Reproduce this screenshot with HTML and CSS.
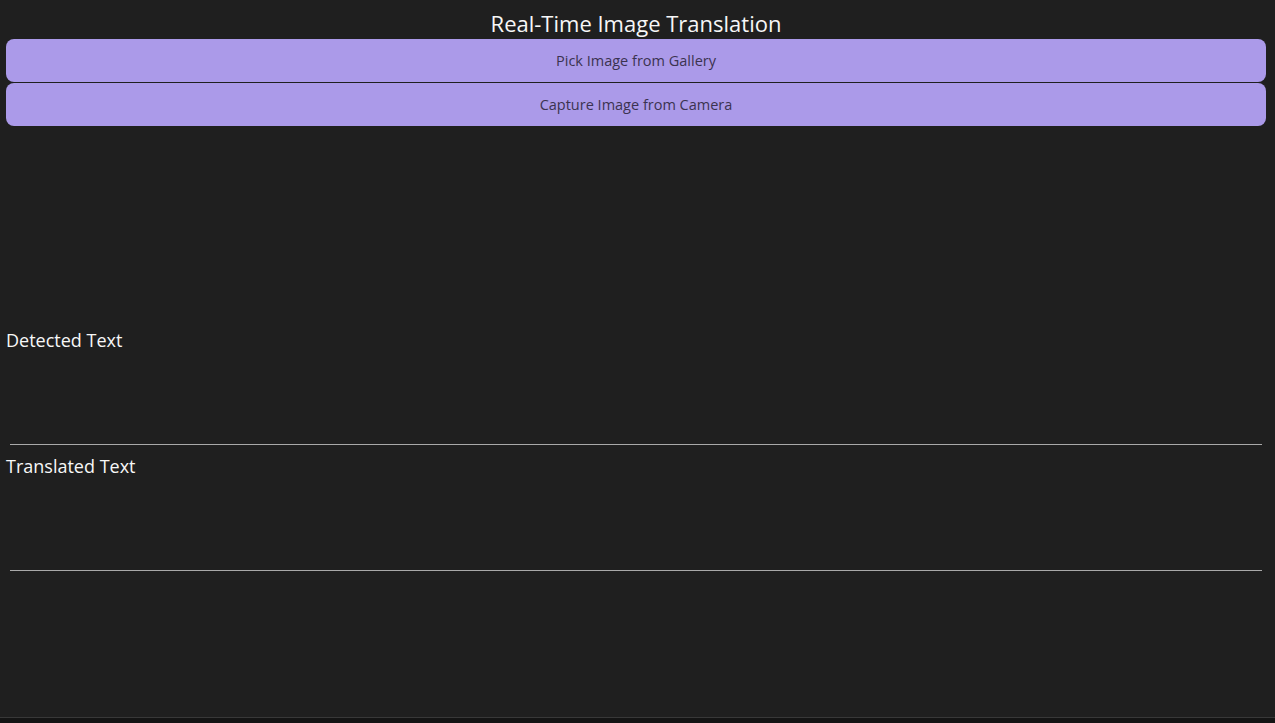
FILE: index.html
```html
<!DOCTYPE html>
<html>
<head>
<meta charset="utf-8">
<link rel="stylesheet" href="styles.css">
</head>
<body>
<div class="app">
  <h1 class="title">Real-Time Image Translation</h1>
  <div class="buttons">
    <button class="btn">Pick Image from Gallery</button>
    <button class="btn">Capture Image from Camera</button>
  </div>
  <div class="image-area"></div>
  <h2 class="label">Detected Text</h2>
  <div class="field"></div>
  <h2 class="label">Translated Text</h2>
  <div class="field"></div>
</div>
<div class="bottom-bar"></div>
</body>
</html>
```
FILE: styles.css
```css
html, body {
  margin: 0;
  padding: 0;
  height: 100%;
  background: #1f1f1f;
  font-family: "Open Sans", "Noto Sans", sans-serif;
  overflow: hidden;
}
body {
  display: flex;
  flex-direction: column;
}
.app {
  flex: 1;
  display: flex;
  flex-direction: column;
  padding: 0 9px 0 6px;
}
.title {
  margin: 8px 0 0;
  height: 31px;
  font-size: 22px;
  font-weight: 400;
  line-height: 31px;
  color: #f7f7f7;
  text-align: center;
}
.buttons {
  display: flex;
  flex-direction: column;
  gap: 1px;
}
.btn {
  height: 43px;
  border: none;
  border-radius: 8px;
  background: #ab9ae9;
  color: #3b3350;
  font-family: "Open Sans", "Noto Sans", sans-serif;
  font-size: 14.5px;
  margin: 0;
  padding: 0;
}
.image-area {
  height: 202px;
}
.label {
  margin: 0;
  font-size: 18px;
  font-weight: 400;
  line-height: 24px;
  color: #f7f7f7;
}
.field {
  height: 92px;
  margin: 0 4px 9px 4px;
  border-bottom: 1px solid #a9a9a9;
}
.bottom-bar {
  height: 5px;
  background: #141414;
  border-top: 1px solid #383838;
}
```
